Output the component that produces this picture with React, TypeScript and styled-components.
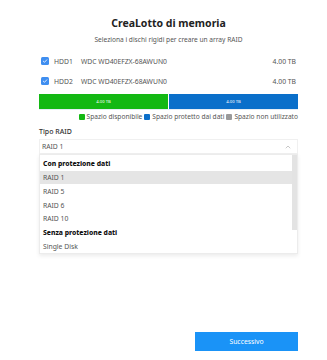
import React from "react";
import styled, { createGlobalStyle } from "styled-components";

const Global = createGlobalStyle`
  html, body { margin: 0; padding: 0; background: #fff; }
  body { font-family: "Noto Sans", "Open Sans", sans-serif; }
  * { box-sizing: border-box; }
`;

const Page = styled.div`
  width: 327px;
  height: 360px;
  display: flex;
  flex-direction: column;
  padding: 0 29px 9px 39px;
`;

const Title = styled.h1`
  margin: 16px 0 0;
  font-size: 10.5px;
  font-weight: 700;
  color: #222;
  text-align: center;
  line-height: 14px;
`;

const Subtitle = styled.p`
  margin: 5px 0 0;
  font-size: 6.6px;
  color: #555;
  text-align: center;
  line-height: 10px;
`;

const DiskList = styled.div`
  margin-top: 6px;
  display: flex;
  flex-direction: column;
`;

const DiskRow = styled.div`
  height: 20px;
  display: flex;
  align-items: center;
  padding-left: 2px;
  font-size: 6.8px;
  color: #555;
`;

const Check = styled.span`
  width: 8px;
  height: 8px;
  border-radius: 1.5px;
  background: #3f8ef0;
  display: inline-flex;
  align-items: center;
  justify-content: center;
  margin-right: 5px;
`;

const DiskName = styled.span`
  width: 27px;
`;

const DiskModel = styled.span`
  flex: 1;
`;

const DiskSize = styled.span`
  margin-right: 2px;
`;

const Bar = styled.div`
  margin-top: 3px;
  height: 15px;
  display: flex;
  gap: 1px;
  box-shadow: 0 1px 0 #e6eef6;
`;

const Segment = styled.div<{ $color: string }>`
  flex: 1;
  background: ${(p) => p.$color};
  color: #fff;
  font-size: 4.2px;
  display: flex;
  align-items: center;
  justify-content: center;
`;

const Legend = styled.div`
  margin-top: 3px;
  display: flex;
  justify-content: flex-end;
  align-items: center;
  gap: 2px;
  font-size: 6.6px;
  color: #555;
  line-height: 10px;
`;

const LegendItem = styled.span`
  display: inline-flex;
  align-items: center;
  gap: 2px;
`;

const Swatch = styled.span<{ $color: string }>`
  width: 6px;
  height: 6px;
  border-radius: 1px;
  background: ${(p) => p.$color};
`;

const FieldLabel = styled.div`
  margin-top: 5px;
  font-size: 7px;
  font-weight: 500;
  color: #333;
  line-height: 10px;
`;

const SelectWrap = styled.div`
  position: relative;
  margin-top: 2px;
`;

const SelectBox = styled.div`
  height: 15px;
  border: 1px solid #f0f0f0;
  display: flex;
  align-items: center;
  justify-content: space-between;
  padding: 0 6px 0 2px;
  font-size: 6.8px;
  color: #555;
`;

const Menu = styled.div`
  position: absolute;
  left: 0;
  right: 0;
  top: 15px;
  height: 100px;
  background: #fff;
  border: 1px solid #ececec;
  box-shadow: 0 2px 4px rgba(0, 0, 0, 0.08);
  display: flex;
`;

const MenuList = styled.div`
  flex: 1;
  display: flex;
  flex-direction: column;
  padding-top: 2px;
`;

const MenuGroup = styled.div`
  height: 14px;
  display: flex;
  align-items: center;
  padding-left: 3px;
  font-size: 6.8px;
  font-weight: 800;
  color: #111;
`;

const MenuItem = styled.div<{ $active?: boolean }>`
  height: 14px;
  display: flex;
  align-items: center;
  padding-left: 3px;
  font-size: 6.8px;
  color: #555;
  background: ${(p) => (p.$active ? "#e5e5e5" : "transparent")};
`;

const ScrollTrack = styled.div`
  width: 5px;
  display: flex;
  flex-direction: column;
`;

const ScrollThumb = styled.div`
  height: 75px;
  background: #e3e3e3;
`;

const Footer = styled.div`
  margin-top: auto;
  display: flex;
  justify-content: flex-end;
`;

const Button = styled.button`
  width: 103px;
  height: 19px;
  border: none;
  background: #1a93f7;
  color: #fff;
  font-family: inherit;
  font-size: 6.8px;
  padding: 0;
  cursor: pointer;
`;

const CheckIcon = () => (
  <svg width="6" height="6" viewBox="0 0 12 12">
    <path d="M2.5 6.2 L5 8.6 L9.6 3.6" fill="none" stroke="#fff" strokeWidth="1.6" strokeLinecap="round" strokeLinejoin="round" />
  </svg>
);

const Chevron = () => (
  <svg width="6" height="4" viewBox="0 0 12 8">
    <path d="M1.5 6.5 L6 2 L10.5 6.5" fill="none" stroke="#aaa" strokeWidth="1.3" />
  </svg>
);

const disks = [
  { name: "HDD1", model: "WDC WD40EFZX-68AWUN0", size: "4.00 TB" },
  { name: "HDD2", model: "WDC WD40EFZX-68AWUN0", size: "4.00 TB" },
];

export default function App() {
  return (
    <>
      <Global />
      <Page>
        <Title>CreaLotto di memoria</Title>
        <Subtitle>Seleziona i dischi rigidi per creare un array RAID</Subtitle>
        <DiskList>
          {disks.map((d) => (
            <DiskRow key={d.name}>
              <Check>
                <CheckIcon />
              </Check>
              <DiskName>{d.name}</DiskName>
              <DiskModel>{d.model}</DiskModel>
              <DiskSize>{d.size}</DiskSize>
            </DiskRow>
          ))}
        </DiskList>
        <Bar>
          <Segment $color="#13b813">4.00 TB</Segment>
          <Segment $color="#0a6fca">4.00 TB</Segment>
        </Bar>
        <Legend>
          <LegendItem>
            <Swatch $color="#13b813" />
            Spazio disponibile
          </LegendItem>
          <LegendItem>
            <Swatch $color="#0a6fca" />
            Spazio protetto dai dati
          </LegendItem>
          <LegendItem>
            <Swatch $color="#9a9a9a" />
            Spazio non utilizzato
          </LegendItem>
        </Legend>
        <FieldLabel>Tipo RAID</FieldLabel>
        <SelectWrap>
          <SelectBox>
            <span>RAID 1</span>
            <Chevron />
          </SelectBox>
          <Menu>
            <MenuList>
              <MenuGroup>Con protezione dati</MenuGroup>
              <MenuItem $active>RAID 1</MenuItem>
              <MenuItem>RAID 5</MenuItem>
              <MenuItem>RAID 6</MenuItem>
              <MenuItem>RAID 10</MenuItem>
              <MenuGroup>Senza protezione dati</MenuGroup>
              <MenuItem>Single Disk</MenuItem>
            </MenuList>
            <ScrollTrack>
              <ScrollThumb />
            </ScrollTrack>
          </Menu>
        </SelectWrap>
        <Footer>
          <Button>Successivo</Button>
        </Footer>
      </Page>
    </>
  );
}
